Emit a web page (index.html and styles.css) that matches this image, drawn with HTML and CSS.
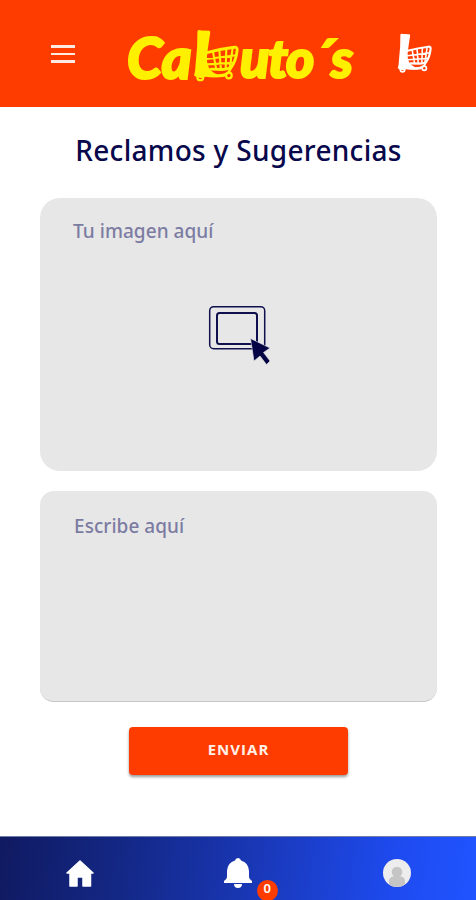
FILE: index.html
```html
<!DOCTYPE html>
<html lang="es">
<head>
<meta charset="utf-8">
<meta name="viewport" content="width=device-width, initial-scale=1">
<title>Reclamos y Sugerencias</title>
<link rel="stylesheet" href="styles.css">
</head>
<body>
<svg class="defs" width="0" height="0" aria-hidden="true">
  <symbol id="cart" viewBox="245 35 145 170">
    <path fill="currentColor" d="M259 44Q260 38 271 41L296 42Q301 44 299 50L293 91Q286 132 291 148Q298 170 322 180L346 178L345 187Q312 192 285 187Q261 197 248 182Q252 174 253 150L258 94Z"/>
    <g fill="none" stroke="currentColor" stroke-linecap="round" stroke-linejoin="round">
      <path stroke-width="9" d="M289 111Q332 99 375 94Q386 93 384 105Q380 137 367 155Q358 164 337 164L302 163"/>
      <path stroke-width="6.500" d="M288 131L382 119M290 148L372 143M308 108L318 163M328 103L333 163M350 98L348 163M370 96L361 158"/>
      <path stroke-width="8" d="M367 155L357 173Q345 184 312 184"/>
      <circle cx="268" cy="189" r="9" stroke-width="7"/>
      <circle cx="358" cy="183" r="9" stroke-width="7"/>
    </g>
  </symbol>
</svg>
<div class="app">
  <header class="topbar">
    <button class="menu" aria-label="Menú"><span></span><span></span><span></span></button>
    <div class="logo">
      <span class="logo-start">Ca</span>
      <svg class="logo-cart"><use href="#cart"/></svg>
      <span class="logo-end">uto´s</span>
    </div>
    <svg class="top-cart"><use href="#cart"/></svg>
  </header>
  <main class="content">
    <h1>Reclamos y Sugerencias</h1>
    <section class="upload">
      <p class="label">Tu imagen aquí</p>
      <svg class="picker" viewBox="0 0 62 60">
        <g fill="none" stroke="#10104e">
          <rect x="1.7" y="1.7" width="55" height="42" rx="4" stroke-width="1.5"/>
          <rect x="9" y="8" width="40" height="31" rx="2.5" stroke-width="2"/>
        </g>
        <path fill="#050545" stroke="#e7e7e7" stroke-width=".6" d="M42.5 33.5L62 43L55.500 47.500L62 56L58.500 59.500L52 51L46 56Z"/>
      </svg>
    </section>
    <section class="message"><p class="label label-write">Escribe aquí</p></section>
    <button class="send">ENVIAR</button>
  </main>
  <nav class="bottombar">
    <div class="tab"><svg class="home" viewBox="0 0 28 27"><path fill="#fff" stroke="#fff" stroke-width="1.500" stroke-linejoin="round" d="M14 1L27 13H24.500V26H17V17H11V26H4V13H1Z"/></svg></div>
    <div class="tab bell-tab">
      <svg class="bell" viewBox="0 0 28 30"><path fill="#fff" d="M14 0Q16.500 0 17 2.500Q24.500 4.500 25 13V19Q25 21 28 23V25H0V23Q3 21 3 19V13Q3.500 4.500 11 2.500Q11.500 0 14 0ZM10 26H18Q18 30 14 30Q10 30 10 26Z"/></svg>
      <span class="badge">0</span>
    </div>
    <div class="tab"><svg class="avatar" viewBox="0 0 28 28"><circle cx="14" cy="14" r="14" fill="#ededed"/><circle cx="14" cy="13" r="5.300" fill="#c5c5c5"/><path fill="#c5c5c5" d="M6 25.500V22Q6 17 14 17Q22 17 22 22V25.500Q14 30.500 6 25.500Z"/></svg></div>
  </nav>
</div>
</body>
</html>
```

FILE: styles.css
```css
* { box-sizing: border-box; }
body { margin: 0; background: #fff; font-family: "Noto Sans", "Open Sans", sans-serif; }
button { border: 0; padding: 0; font-family: inherit; }
.defs { position: absolute; }
.app { height: 900px; display: flex; flex-direction: column; overflow: hidden; }
.topbar { height: 107px; flex: none; display: flex; align-items: flex-start; background: #ff3c00; }
.menu { width: 24px; margin: 45px 0 0 51px; background: none; display: flex; flex-direction: column; gap: 5px; }
.menu span { height: 2.600px; background: #ffe9e0; }
.logo { display: flex; align-items: flex-start; width: 229px; margin: 27px 0 0 51px; color: #fff000; font: italic 900 57px/60px Lato, sans-serif; white-space: nowrap; -webkit-text-stroke: 2.200px #fff000; }
.logo-start { width: 67px; flex: none; padding-left: 1px; }
.logo-cart { flex: none; width: 46px; height: 55px; margin-top: 1px; }
.logo-end { padding: 1px 0 0 1px; font-size: 54px; letter-spacing: -1.500px; }
.top-cart { width: 35px; height: 42px; margin: 32px 0 0 42px; color: #fff; }
.content { flex: 1; padding: 25px 39px 0 40px; display: flex; flex-direction: column; align-items: center; }
h1 { margin: 0; height: 66px; font-size: 28px; line-height: 36px; font-weight: 550; color: #08084c; white-space: nowrap; letter-spacing: .3px; }
.upload, .message { width: 397px; flex: none; background: #e7e7e7; }
.upload { height: 273px; border-radius: 20px; display: flex; flex-direction: column; }
.message { height: 211px; margin-top: 20px; border-radius: 14px; border-bottom: 1px solid #c6c6c6; }
.label { margin: 20px 0 0 33px; font-size: 19px; line-height: 26px; font-weight: 530; color: #7c7ca2; letter-spacing: .05px; }
.label-write { margin: 22px 0 0 34px; }
.picker { width: 62px; height: 60px; margin: 61px 0 0 168px; }
.send { width: 219px; height: 48px; flex: none; margin: 25px 0 0; padding-bottom: 5px; border-radius: 4px; background: #ff3c00; color: #fff0e8; font-family: "Open Sans", sans-serif; font-size: 15px; font-weight: 700; letter-spacing: 1px; box-shadow: 0 2px 3px rgba(0,0,0,.4); }
.bottombar { height: 64px; flex: none; display: grid; grid-template-columns: repeat(3, 1fr); background: linear-gradient(96deg, #101a61 0%, #132784 25%, #1936b2 51%, #1e4bf0 83%, #2054ff 100%) border-box; border-top: 1px solid #707cab; }
.tab { position: relative; display: flex; justify-content: center; align-items: flex-start; }
.home { width: 28px; height: 27px; margin: 23px 0 0 1px; }
.bell { width: 28px; height: 30px; margin-top: 21px; }
.badge { position: absolute; left: 98px; top: 43px; width: 21px; height: 21px; border-radius: 50%; background: #ff3c00; color: #fff; font-size: 13px; line-height: 17px; font-weight: 600; text-align: center; }
.avatar { width: 28px; height: 28px; margin-top: 22px; }
```
